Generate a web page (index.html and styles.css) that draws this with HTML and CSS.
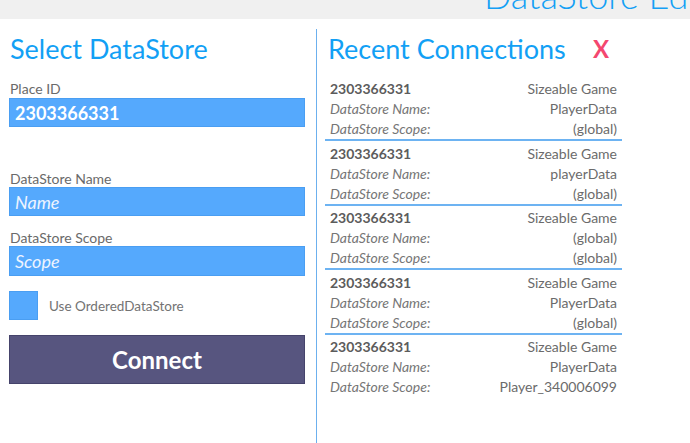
FILE: index.html
```html
<!DOCTYPE html>
<html>
<head>
<meta charset="utf-8">
<link rel="stylesheet" href="styles.css">
</head>
<body>
<div class="topbar"><span class="app-title">DataStore Editor</span></div>
<div class="main">
  <div class="left">
    <h1 class="heading">Select DataStore</h1>
    <div class="label first">Place ID</div>
    <div class="field"><span class="value">2303366331</span></div>
    <div class="label spaced">DataStore Name</div>
    <div class="field"><span class="placeholder">Name</span></div>
    <div class="label">DataStore Scope</div>
    <div class="field tall"><span class="placeholder">Scope</span></div>
    <div class="check-row">
      <div class="checkbox"></div>
      <span class="check-label">Use OrderedDataStore</span>
    </div>
    <div class="connect">Connect</div>
  </div>
  <div class="right">
    <div class="right-head">
      <h1 class="heading">Recent Connections</h1>
      <span class="close">X</span>
    </div>
    <div class="rows">
      <div class="row">
        <div class="line"><span class="id">2303366331</span><span class="val">Sizeable Game</span></div>
        <div class="line"><span class="key">DataStore Name:</span><span class="val">PlayerData</span></div>
        <div class="line"><span class="key">DataStore Scope:</span><span class="val">(global)</span></div>
      </div>
      <div class="row">
        <div class="line"><span class="id">2303366331</span><span class="val">Sizeable Game</span></div>
        <div class="line"><span class="key">DataStore Name:</span><span class="val">playerData</span></div>
        <div class="line"><span class="key">DataStore Scope:</span><span class="val">(global)</span></div>
      </div>
      <div class="row">
        <div class="line"><span class="id">2303366331</span><span class="val">Sizeable Game</span></div>
        <div class="line"><span class="key">DataStore Name:</span><span class="val">(global)</span></div>
        <div class="line"><span class="key">DataStore Scope:</span><span class="val">(global)</span></div>
      </div>
      <div class="row">
        <div class="line"><span class="id">2303366331</span><span class="val">Sizeable Game</span></div>
        <div class="line"><span class="key">DataStore Name:</span><span class="val">PlayerData</span></div>
        <div class="line"><span class="key">DataStore Scope:</span><span class="val">(global)</span></div>
      </div>
      <div class="row last">
        <div class="line"><span class="id">2303366331</span><span class="val">Sizeable Game</span></div>
        <div class="line"><span class="key">DataStore Name:</span><span class="val">PlayerData</span></div>
        <div class="line"><span class="key">DataStore Scope:</span><span class="val">Player_340006099</span></div>
      </div>
    </div>
  </div>
</div>
</body>
</html>
```

FILE: styles.css
```css
* { box-sizing: border-box; }
html, body {
  margin: 0;
  padding: 0;
  background: #ffffff;
  font-family: Lato, "Liberation Sans", sans-serif;
  width: 690px;
  height: 443px;
  overflow: hidden;
}
.topbar {
  height: 19px;
  background: #f0f0f0;
  overflow: hidden;
  padding-left: 484px;
}
.app-title {
  display: block;
  font-size: 36px;
  font-weight: 300;
  color: #14a0f5;
  line-height: 36px;
  margin-top: -23px;
  white-space: nowrap;
}
.main {
  display: flex;
  margin-top: 10px;
  height: 414px;
}
.left {
  width: 317px;
  padding: 5px 11px 0 9px;
  border-right: 1.5px solid #6cb0ee;
  display: flex;
  flex-direction: column;
}
.heading {
  margin: 0;
  font-size: 27px;
  font-weight: 400;
  line-height: 30px;
  color: #12a0f5;
  padding-left: 1px;
  white-space: nowrap;
}
.label {
  font-size: 14px;
  line-height: 16px;
  color: #6a6a6a;
  margin-top: 14px;
  margin-bottom: 0;
  padding-left: 1px;
}
.label.first { margin-top: 17px; margin-bottom: 1px; }
.label.spaced { margin-top: 44px; }
.field {
  height: 29px;
  background: #55a9fd;
  border: 1px solid #4a9ef2;
  display: flex;
  align-items: center;
  padding-left: 5px;
}
.field.tall { height: 30px; }
.value {
  color: #ffffff;
  font-weight: 700;
  font-size: 18px;
}
.placeholder {
  color: #eef4ff;
  font-style: italic;
  font-size: 18px;
}
.check-row {
  display: flex;
  align-items: center;
  margin-top: 15px;
  gap: 11px;
}
.checkbox {
  width: 29px;
  height: 29px;
  background: #55a9fd;
  border: 1px solid #4a9ef2;
}
.check-label {
  font-size: 13.5px;
  color: #737373;
}
.connect {
  margin-top: 15px;
  height: 49px;
  background: #57557f;
  border: 1px solid #45436b;
  color: #ffffff;
  font-weight: 700;
  font-size: 24px;
  display: flex;
  align-items: center;
  justify-content: center;
}
.right {
  flex: 1;
  padding: 5px 0 0 8px;
}
.right-head {
  width: 297px;
  display: flex;
  justify-content: space-between;
  align-items: center;
  padding-left: 2px;
  padding-right: 13px;
}
.close {
  color: #f4476f;
  font-weight: 700;
  font-size: 24px;
  line-height: 30px;
}
.rows {
  width: 297px;
  margin-top: 15px;
}
.row {
  padding: 2.5px 5px 0 5px;
  border-bottom: 2px solid #6db3f2;
}
.row:first-child { padding-top: 0; }
.row.last { border-bottom: none; }
.line {
  display: flex;
  justify-content: space-between;
  line-height: 20px;
  font-size: 14px;
  white-space: nowrap;
}
.id {
  font-weight: 700;
  color: #5c5c5c;
}
.key {
  font-style: italic;
  color: #767676;
}
.val {
  color: #6b6b6b;
}
```
